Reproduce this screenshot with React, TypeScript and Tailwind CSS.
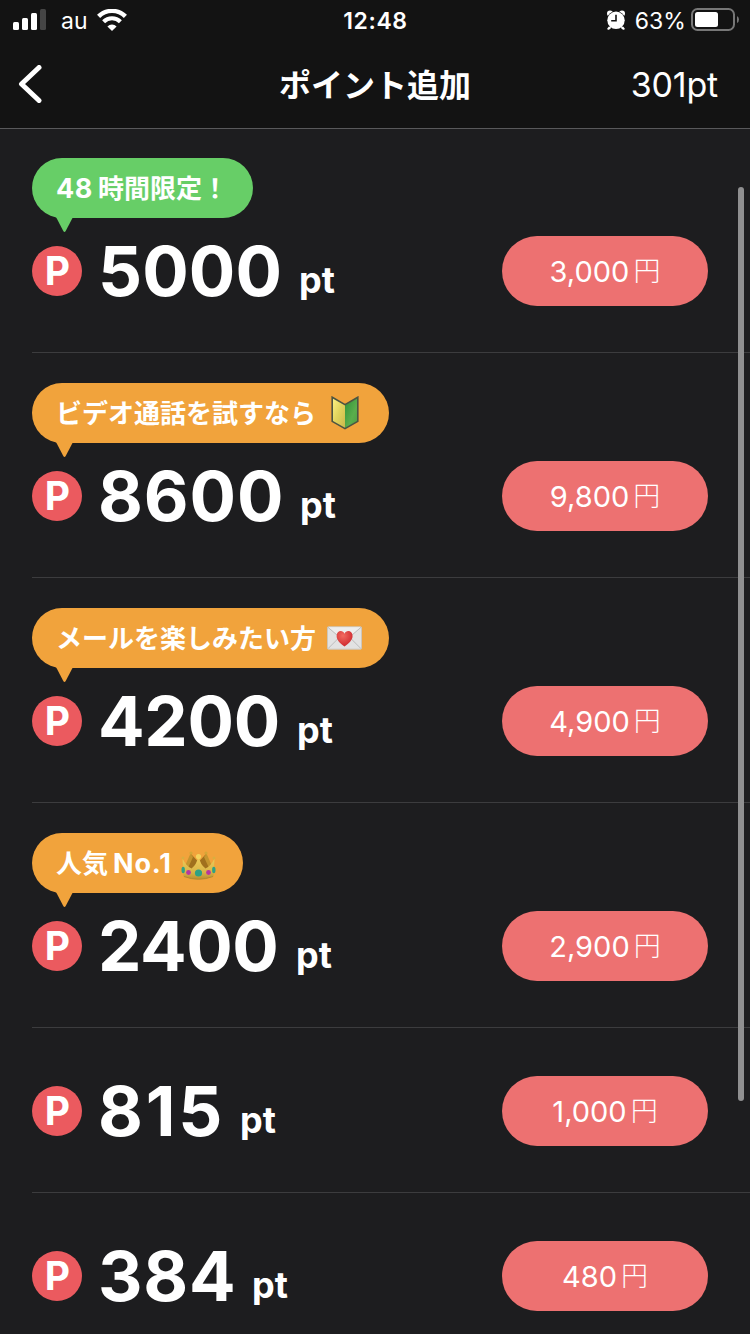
type Badge = {
  kind: "limited" | "video" | "mail" | "popular";
  width: string;
};

type Plan = {
  points: string;
  pointsStyle: string;
  price: string;
  badge?: Badge;
};

const plans: Plan[] = [
  { points: "5000", pointsStyle: "w-[183px] tracking-[0.1px]", price: "3,000", badge: { kind: "limited", width: "w-[221px]" } },
  { points: "8600", pointsStyle: "w-[184px] tracking-[0.9px]", price: "9,800", badge: { kind: "video", width: "w-[357px]" } },
  { points: "4200", pointsStyle: "w-[181px] tracking-[-0.3px]", price: "4,900", badge: { kind: "mail", width: "w-[357px]" } },
  { points: "2400", pointsStyle: "w-[180px] tracking-[-0.4px]", price: "2,900", badge: { kind: "popular", width: "w-[211px]" } },
  { points: "815", pointsStyle: "w-[124px] tracking-[2.8px]", price: "1,000" },
  { points: "384", pointsStyle: "w-[136px] tracking-[0.8px]", price: "480" },
];

function SignalIcon() {
  return (
    <svg width="34" height="22" viewBox="0 0 34 22" fill="#fff">
      <rect x="1" y="13" width="6" height="8" rx="1.5" />
      <rect x="10" y="9" width="6" height="12" rx="1.5" />
      <rect x="19" y="4" width="6" height="17" rx="1.5" />
      <rect x="28" y="0" width="6" height="21" rx="1.5" fill="#454545" />
    </svg>
  );
}

function WifiIcon() {
  return (
    <svg width="30" height="22" viewBox="0 0 30 22" fill="none" stroke="#fff">
      <path d="M1.6 7.4a19 19 0 0 1 26.8 0" strokeWidth="4.4" />
      <path d="M6.6 12.7a12 12 0 0 1 16.8 0" strokeWidth="4.2" />
      <path d="M15 22l-4.6-4.5a6.4 6.4 0 0 1 9.2 0z" fill="#fff" stroke="none" />
    </svg>
  );
}

function AlarmIcon() {
  return (
    <svg width="20" height="20" viewBox="0 0 20 20">
      <circle cx="4" cy="3.6" r="3" fill="#fff" />
      <circle cx="16" cy="3.6" r="3" fill="#fff" />
      <path d="M4.5 16L2.3 18.8M15.5 16l2.2 2.8" stroke="#fff" strokeWidth="2" strokeLinecap="round" />
      <circle cx="10" cy="10.3" r="9.3" fill="#131313" />
      <circle cx="10" cy="10.3" r="8.7" fill="#fff" />
      <path d="M4.5 17.2L3 18.9M15.5 17.2l1.5 1.7" stroke="#fff" strokeWidth="1.8" />
      <path d="M10 4.8v6H5.2" fill="none" stroke="#131313" strokeWidth="1.6" />
    </svg>
  );
}

function BatteryIcon() {
  return (
    <svg width="48" height="24" viewBox="0 0 48 24" fill="none">
      <rect x="1" y="1" width="42" height="21" rx="5.5" stroke="#777" strokeWidth="2" />
      <rect x="4" y="4" width="23" height="15" rx="2.5" fill="#fff" />
      <path d="M46 8q2 1 2 3.5T46 15z" fill="#777" />
    </svg>
  );
}

function BeginnerMark() {
  return (
    <svg width="28" height="34" viewBox="0 0 28 34">
      <defs>
        <linearGradient id="leafYellow" x1="0" y1="0" x2="1" y2="1">
          <stop offset="0" stopColor="#fdf387" />
          <stop offset="0.5" stopColor="#e1d35c" />
          <stop offset="1" stopColor="#c9b84c" />
        </linearGradient>
        <linearGradient id="leafGreen" x1="0" y1="0" x2="1" y2="1">
          <stop offset="0" stopColor="#2f9038" />
          <stop offset="0.6" stopColor="#5aae4c" />
          <stop offset="1" stopColor="#4c9c42" />
        </linearGradient>
      </defs>
      <path d="M1.2 1.5L14 9v23.3L1.2 25.5z" fill="url(#leafYellow)" />
      <path d="M26.8 1.5L14 9v23.3l12.8-6.8z" fill="url(#leafGreen)" />
      <path d="M1.2 1.2L14 8.6l12.8-7.4v24.2L14 32.6 1.2 25.4z" fill="none" stroke="#4c5442" strokeWidth="1.6" />
    </svg>
  );
}

function LoveLetter() {
  return (
    <svg width="35" height="24" viewBox="0 0 36 24">
      <defs>
        <radialGradient id="heart" cx="0.4" cy="0.3" r="0.7">
          <stop offset="0" stopColor="#f26a60" />
          <stop offset="1" stopColor="#ce292f" />
        </radialGradient>
      </defs>
      <rect x="0.5" y="0.5" width="35" height="23" rx="0.8" fill="#e2e2e2" stroke="#cbc6bd" />
      <path d="M1 1l17 14L35 1z" fill="#eeeeee" />
      <path d="M1 23l12-12M35 23L23 11M1 1l14 12M35 1L21 13" fill="none" stroke="#b5b5b5" strokeWidth="0.9" />
      <path d="M18 20.8C13 17.2 9.9 13.8 9.9 9.9c0-6 6.6-6.6 8.1-2.3 1.5-4.3 8.3-3.7 8.3 2.3 0 3.9-3.3 7.3-8.3 10.9z" fill="url(#heart)" />
    </svg>
  );
}

function Crown() {
  return (
    <svg width="35" height="29" viewBox="0 0 35 29">
      <defs>
        <linearGradient id="gold" x1="0" y1="0" x2="0" y2="1">
          <stop offset="0" stopColor="#f0cf5c" />
          <stop offset="0.7" stopColor="#d9b446" />
          <stop offset="1" stopColor="#b98f31" />
        </linearGradient>
      </defs>
      <path d="M5 17L10 3l7.5 8L25 3l5 14-5 3H10z" fill="#a0701d" />
      <path d="M4 15l5.5-12.5L12 6l-5 11zM31 15L25.5 2.5 23 6l5 11z" fill="#c4952f" />
      <path d="M1.5 7.5Q5 15 10.5 17.5 15.5 14 17.5 5q2 9 7 12.5Q30 15 33.5 7.5L32.5 25.5Q17.5 31 2.5 25.5z" fill="url(#gold)" />
      <circle cx="17.5" cy="5.5" r="2.6" fill="#f3d35c" />
      <circle cx="10" cy="2" r="1.6" fill="#d4a738" />
      <circle cx="25" cy="2" r="1.6" fill="#d4a738" />
      <circle cx="2" cy="7" r="1.5" fill="#d9ae40" />
      <circle cx="33" cy="7" r="1.5" fill="#d9ae40" />
      <path d="M3 25.5q14.5 5.5 29 0" fill="none" stroke="#b38a30" />
      <circle cx="17.5" cy="22" r="3.6" fill="#2fa184" />
      <circle cx="7.5" cy="21.5" r="2.4" fill="#b637a0" />
      <circle cx="27.5" cy="21.5" r="2.4" fill="#b637a0" />
      <ellipse cx="2.2" cy="19" rx="1.7" ry="3.3" fill="#2fa184" />
      <ellipse cx="32.8" cy="19" rx="1.7" ry="3.3" fill="#2fa184" />
    </svg>
  );
}

function BadgeContent({ kind }: { kind: Badge["kind"] }) {
  if (kind === "limited") {
    return (
      <>
        <span className="mr-[5px] font-['Inter',sans-serif] text-[27px] tracking-[0.6px]">48</span>
        <span className="pb-[3px]">時間限定！</span>
      </>
    );
  }
  if (kind === "video") {
    return (
      <>
        <span className="pb-[3px]">ビデオ通話を試すなら</span>
        <span className="ml-[15px]"><BeginnerMark /></span>
      </>
    );
  }
  if (kind === "mail") {
    return (
      <>
        <span className="pb-[3px]">メールを楽しみたい方</span>
        <span className="ml-[11px]"><LoveLetter /></span>
      </>
    );
  }
  return (
    <>
      <span className="pb-[3px]">人気</span>
      <span className="ml-[5px] font-['Inter',sans-serif] text-[27px] tracking-[0.8px]">No.1</span>
      <span className="ml-[9px] pt-1"><Crown /></span>
    </>
  );
}

function BadgeBubble({ badge }: { badge: Badge }) {
  const green = badge.kind === "limited";
  return (
    <div
      className={`relative mb-[18px] flex h-[60px] items-center rounded-full pl-6 text-[26px] leading-none font-bold whitespace-nowrap ${badge.width} ${green ? "bg-[#67ce67]" : "bg-[#f1a33c]"}`}
    >
      <BadgeContent kind={badge.kind} />
      <svg
        className={`absolute top-[59px] left-6 ${green ? "text-[#67ce67]" : "text-[#f1a33c]"}`}
        width="17"
        height="15"
        viewBox="0 0 17 15"
        fill="currentColor"
      >
        <path d="M0 0h17L9.7 14q-1.2 2-2.4 0z" />
      </svg>
    </div>
  );
}

function PlanRow({ plan }: { plan: Plan }) {
  return (
    <li className={`ml-8 border-b border-[#3c3c3e] pr-[42px] pb-[46px] ${plan.badge ? "pt-[30px]" : "pt-12"}`}>
      {plan.badge && <BadgeBubble badge={plan.badge} />}
      <div className="flex h-[70px] items-center font-['Inter','Noto_Sans_CJK_JP',sans-serif]">
        <span className="flex size-[50px] shrink-0 items-center justify-center rounded-full bg-[#eb5a5f] pb-0.5 pl-px text-[39px] leading-none font-bold">
          P
        </span>
        <span className={`ml-4 text-[69px] leading-none font-bold ${plan.pointsStyle}`}>{plan.points}</span>
        <span className="ml-[18px] pt-[18px] text-[36px] leading-none font-bold">pt</span>
        <button className="ml-auto flex h-[70px] w-[206px] items-center justify-center rounded-full bg-[#ed7171] text-[29px] leading-none">
          {plan.price}
          <span className="ml-1 pb-[3px] font-['Noto_Sans_CJK_JP',sans-serif] text-[27px] font-light">円</span>
        </button>
      </div>
    </li>
  );
}

export default function App() {
  return (
    <div className="relative h-[1334px] w-[750px] overflow-hidden bg-[#1d1d1f] font-['Noto_Sans_CJK_JP',sans-serif] text-white">
      <header className="relative h-32 bg-[#131313] font-['Inter','Noto_Sans_CJK_JP',sans-serif] shadow-[0_1px_0_#59595b]">
        <div className="grid h-10 grid-cols-3 items-center pr-[11px] pl-3 text-[23px] leading-none">
          <div className="flex items-center">
            <SignalIcon />
            <span className="mr-[9px] ml-[15px] pt-0.5">au</span>
            <WifiIcon />
          </div>
          <span className="pt-0.5 text-center font-semibold tracking-[0.6px]">12:48</span>
          <div className="flex items-center justify-end">
            <AlarmIcon />
            <span className="mr-[5px] ml-[9px] pt-0.5 tracking-[0.1px]">63%</span>
            <BatteryIcon />
          </div>
        </div>
        <div className="grid h-[88px] grid-cols-3 items-center px-8">
          <svg className="-ml-3.5" width="24" height="38" viewBox="0 0 24 38" fill="none" stroke="#fff" strokeWidth="5" strokeLinecap="round" strokeLinejoin="round">
            <path d="M21 2.5L3.5 19 21 35.5" />
          </svg>
          <h1 className="pb-[3px] text-center font-['Noto_Sans_CJK_JP',sans-serif] text-[32px] leading-none font-bold whitespace-nowrap">
            ポイント追加
          </h1>
          <span className="pt-px text-right text-[34px] leading-none tracking-[-0.2px]">301pt</span>
        </div>
      </header>
      <ul>
        {plans.map((plan) => (
          <PlanRow key={plan.points} plan={plan} />
        ))}
      </ul>
      <div className="absolute top-[187px] right-1.5 h-[914px] w-1.5 rounded-full bg-[#8f8f90]" />
    </div>
  );
}
